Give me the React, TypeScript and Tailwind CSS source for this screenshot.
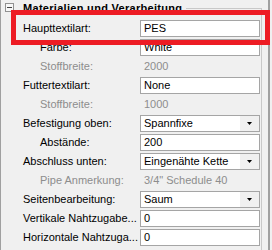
import { ReactNode } from "react";

type Row = {
  label: string;
  indent?: boolean;
  muted?: boolean;
  value: string;
  kind: "text" | "combo" | "plain";
};

const ROWS: Row[] = [
  { label: "Haupttextilart:", value: "PES", kind: "text" },
  { label: "Farbe:", indent: true, value: "White", kind: "text" },
  { label: "Stoffbreite:", indent: true, muted: true, value: "2000", kind: "plain" },
  { label: "Futtertextilart:", value: "None", kind: "text" },
  { label: "Stoffbreite:", indent: true, muted: true, value: "1000", kind: "plain" },
  { label: "Befestigung oben:", value: "Spannfixe", kind: "combo" },
  { label: "Abstände:", indent: true, value: "200", kind: "text" },
  { label: "Abschluss unten:", value: "Eingenähte Kette", kind: "combo" },
  { label: "Pipe Anmerkung:", indent: true, muted: true, value: '3/4" Schedule 40', kind: "plain" },
  { label: "Seitenbearbeitung:", value: "Saum", kind: "combo" },
  { label: "Vertikale Nahtzugabe...", value: "0", kind: "text" },
  { label: "Horizontale Nahtzuga...", value: "0", kind: "text" },
];

const Field = ({ row }: { row: Row }): ReactNode => {
  if (row.kind === "plain") {
    return <div className="h-[17px] flex items-center pl-[4px] text-[#8d8d8d]">{row.value}</div>;
  }
  return (
    <div className="h-[17px] flex border border-[#a5a5a5] bg-white">
      <div className="flex-1 flex items-center pl-[3px] text-black">{row.value}</div>
      {row.kind === "combo" && (
        <div className="w-[19px] flex items-center justify-center bg-[#f0f0f0]">
          <svg width="5" height="3" viewBox="0 0 5 3">
            <path d="M0 0h5L2.5 3z" fill="#000" />
          </svg>
        </div>
      )}
    </div>
  );
};

export default function App() {
  return (
    <div className="relative w-[272px] h-[250px] overflow-hidden flex bg-[#f0f0f0] font-['Liberation_Sans',Arial,sans-serif] text-[11px] leading-[13px] text-black">
      <div className="w-px bg-[#a0a0a0]" />
      <div className="w-[267px] flex flex-col">
        {/* group header */}
        <div className="h-[20px] flex">
          <div className="ml-[4px] mt-[3px] w-[9px] h-[9px] border border-[#919191] bg-[#f7f7f7] flex items-center justify-center">
            <div className="w-[5px] h-px bg-[#444]" />
          </div>
          <div className="ml-[9px] mt-[2px] font-bold whitespace-nowrap tracking-[0.3px]">Materialien und Verarbeitung</div>
          <div className="ml-[4px] mr-[6px] mt-[8px] flex-1 border-t border-r border-[#c8c8c8]" />
        </div>
        <div className="w-[261px] pr-px border-r border-[#c8c8c8] flex-1">
          {ROWS.map((row, i) => (
            <div key={i} className="grid grid-cols-[139px_120px] mb-[2px]">
              <div
                className={`h-[17px] flex items-center whitespace-nowrap ${row.indent ? "pl-[39px]" : "pl-[22px]"} ${row.muted ? "text-[#8d8d8d]" : ""}`}
              >
                {row.label}
              </div>
              <Field row={row} />
            </div>
          ))}
        </div>
      </div>
      <div className="w-[2px] bg-[#a0a0a0]" />
      <div className="w-[2px]" />
      {/* highlight marker */}
      <div className="absolute left-[11px] top-[10px] w-[259px] h-[35px] border-[5px] border-[#ed1c24]" />
    </div>
  );
}
